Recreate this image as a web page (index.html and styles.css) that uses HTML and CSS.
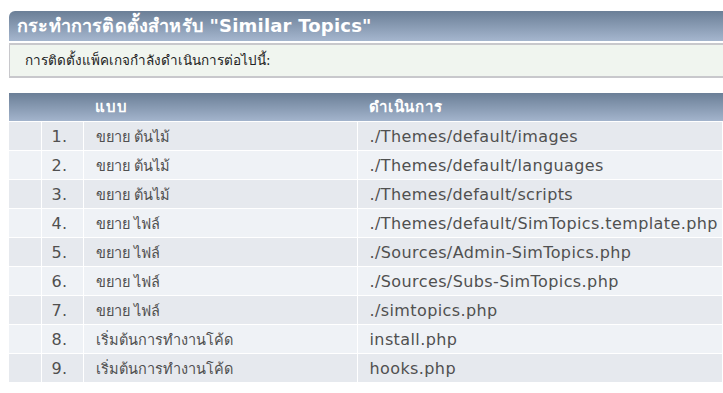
FILE: index.html
```html
<!DOCTYPE html>
<html lang="th">
<head>
    <meta charset="UTF-8">
    <meta name="viewport" content="width=device-width, initial-scale=1.0">
    <title>Similar Topics</title>
    <link rel="stylesheet" href="styles.css">
</head>
<body>
    <div class="cat-bar">
        <h3>กระทำการติดตั้งสำหรับ "Similar Topics"</h3>
    </div>
    <div class="information">การติดตั้งแพ็คเกจกำลังดำเนินการต่อไปนี้:</div>

    <table class="table-grid">
        <colgroup>
            <col class="col-icon">
            <col class="col-num">
            <col class="col-type">
            <col>
        </colgroup>
        <thead>
            <tr>
                <th></th>
                <th></th>
                <th>แบบ</th>
                <th>ดำเนินการ</th>
            </tr>
        </thead>
        <tbody>
            <tr class="windowbg">
                <td></td><td class="num">1.</td><td class="type">ขยาย ต้นไม้</td><td>./Themes/default/images</td>
            </tr>
            <tr class="windowbg2">
                <td></td><td class="num">2.</td><td class="type">ขยาย ต้นไม้</td><td>./Themes/default/languages</td>
            </tr>
            <tr class="windowbg">
                <td></td><td class="num">3.</td><td class="type">ขยาย ต้นไม้</td><td>./Themes/default/scripts</td>
            </tr>
            <tr class="windowbg2">
                <td></td><td class="num">4.</td><td class="type">ขยาย ไฟล์</td><td>./Themes/default/SimTopics.template.php</td>
            </tr>
            <tr class="windowbg">
                <td></td><td class="num">5.</td><td class="type">ขยาย ไฟล์</td><td>./Sources/Admin-SimTopics.php</td>
            </tr>
            <tr class="windowbg2">
                <td></td><td class="num">6.</td><td class="type">ขยาย ไฟล์</td><td>./Sources/Subs-SimTopics.php</td>
            </tr>
            <tr class="windowbg">
                <td></td><td class="num">7.</td><td class="type">ขยาย ไฟล์</td><td>./simtopics.php</td>
            </tr>
            <tr class="windowbg2">
                <td></td><td class="num">8.</td><td class="type">เริ่มต้นการทำงานโค้ด</td><td>install.php</td>
            </tr>
            <tr class="windowbg">
                <td></td><td class="num">9.</td><td class="type">เริ่มต้นการทำงานโค้ด</td><td>hooks.php</td>
            </tr>
        </tbody>
    </table>
</body>
</html>
```

FILE: styles.css
```css
body {
    font-family: "DejaVu Sans", Tahoma, sans-serif;
    background-color: #fff;
    color: #444;
    margin: 0;
    padding: 11px 0 0 9px;
    overflow: hidden;
}
.cat-bar {
    background: linear-gradient(#6b7f97, #a5b6ce);
    border-radius: 6px 0 0 0;
    height: 30px;
    padding: 0 8px;
}
.cat-bar h3 {
    margin: 0;
    color: #fff;
    font-size: 18px;
    line-height: 30px;
    font-weight: bold;
    letter-spacing: 0.2px;
}
.information {
    margin-top: 2px;
    background-color: #f0f5ef;
    border-top: 2px solid #c8c8cc;
    border-bottom: 2px solid #c8c8cc;
    border-left: 1px solid #c8c8cc;
    padding: 0 15px;
    height: 31px;
    line-height: 31px;
    font-size: 13.5px;
    color: #222;
}
.table-grid {
    margin-top: 15px;
    border-collapse: collapse;
    table-layout: fixed;
    width: 714px;
    font-size: 16px;
    letter-spacing: 0.4px;
}
.col-icon {
    width: 32px;
}
.col-num {
    width: 42px;
}
.col-type {
    width: 274px;
}
.table-grid th {
    background: linear-gradient(#6b7f97, #a3b4cc);
    color: #fff;
    text-align: left;
    height: 28px;
    padding: 0 0 0 12px;
    font-size: 15px;
    letter-spacing: 0.8px;
}
.table-grid td {
    height: 28px;
    padding: 0 0 0 12px;
    border-top: 1px solid #fff;
    border-right: 1px solid #fff;
    color: #505050;
    white-space: nowrap;
    overflow: hidden;
}
.table-grid td.num {
    text-align: right;
    padding: 0 15px 0 0;
}
.table-grid td.type {
    font-size: 14.5px;
    letter-spacing: 0;
}
.windowbg {
    background-color: #e6e9ee;
}
.windowbg2 {
    background-color: #eff2f6;
}
```
